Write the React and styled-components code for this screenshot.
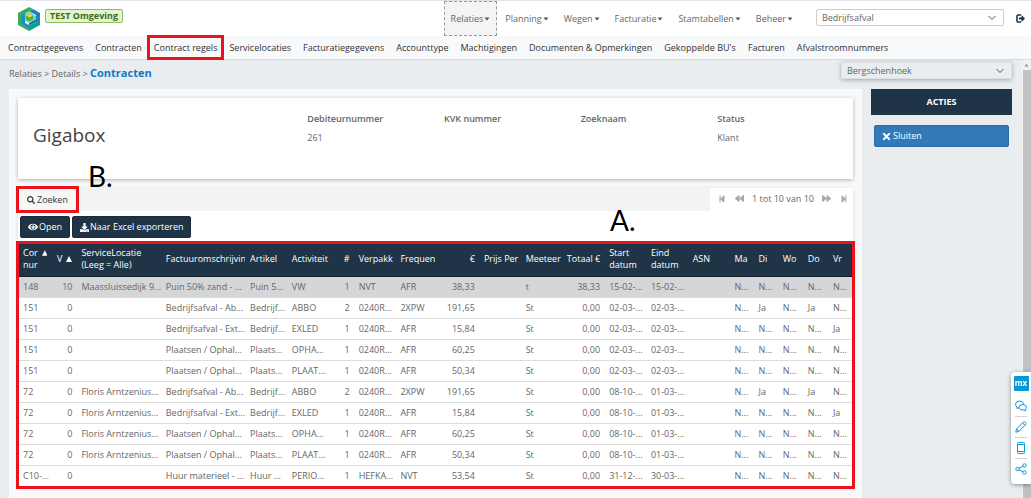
import React from 'react';
import styled, { createGlobalStyle, css } from 'styled-components';
import {
  FaBackward,
  FaDownload,
  FaEye,
  FaForward,
  FaSearch,
  FaStepBackward,
  FaStepForward,
  FaTimes,
} from 'react-icons/fa';

const GlobalStyle = createGlobalStyle`
  * { box-sizing: border-box; }
  body {
    margin: 0;
    background: #e9edf0;
    color: #666;
    font: 9px/12px "Open Sans", "Noto Sans", sans-serif;
  }
  button, select { font: inherit; color: inherit; }
  a { color: inherit; text-decoration: none; }
`;

const marked = css`
  outline: 3px solid #ed111c;
`;

const Page = styled.div`
  display: flex;
  flex-direction: column;
  min-height: 100vh;
`;

const TopBar = styled.header`
  display: flex;
  height: 36px;
  padding-right: 6px;
  background: #fff;
  border-top: 1px solid #e1e3e9;
`;

const Brand = styled.div`
  display: flex;
  flex: 1;
  align-items: flex-start;
  gap: 4px;
  padding: 5px 0 0 17px;
`;

const EnvBadge = styled.span`
  height: 14px;
  margin-top: 3px;
  padding: 0 4px;
  border: 1px solid #8dbb60;
  border-radius: 2px;
  background: #e4f4d1;
  color: #3b6b11;
  font-weight: 700;
  line-height: 12px;
`;

const MainMenu = styled.nav`
  display: flex;
  gap: 1px;
  margin-right: 16px;
`;

const MenuButton = styled.button`
  display: flex;
  align-items: center;
  gap: 1px;
  padding: 0 6px;
  border: 1px dashed ${p => (p.$open ? '#999' : 'transparent')};
  background: ${p => (p.$open ? '#f4f4f4' : 'none')};
  color: #666;
`;

const SelectWrap = styled.label`
  display: flex;
  position: relative;
  width: ${p => p.$width};
  height: 17px;
  margin-top: ${p => p.$top};
  border-radius: 2px;
  box-shadow: ${p => (p.$raised ? '0 1px 4px rgba(0, 0, 0, 0.3)' : 'none')};

  select {
    width: 100%;
    padding: 0 20px 0 5px;
    border: 1px solid ${p => (p.$raised ? '#dde1e4' : '#ccc')};
    border-radius: 2px;
    background: ${p => (p.$raised ? '#e9edf0' : '#fff')};
    appearance: none;
  }

  svg {
    position: absolute;
    top: 6px;
    right: 7px;
    pointer-events: none;
  }
`;

const IconButton = styled.button`
  display: flex;
  align-items: center;
  padding: 0;
  border: 0;
  background: none;
  color: ${p => p.$color || '#1f3446'};
`;

const SubNav = styled.nav`
  display: flex;
  height: 24px;
  padding-left: 2px;
  background: #f8f9fb;
  border-bottom: 1px solid #d8dcdf;
`;

const SubLink = styled.a`
  display: flex;
  align-items: center;
  padding: 0 6px;
  color: #333;
  white-space: nowrap;
  ${p => p.$marked && marked}
  outline-offset: -2px;
`;

const Body = styled.div`
  display: flex;
  flex: 1;
`;

const Content = styled.main`
  flex: 1;
  min-width: 0;
  padding: 0 10px 0 9px;
  display: flex;
  flex-direction: column;
`;

const CrumbRow = styled.div`
  display: flex;
  justify-content: space-between;
  height: 29px;
`;

const Crumbs = styled.div`
  padding-top: 7px;

  strong {
    color: #0b7bc8;
    font-size: 11px;
  }
`;

const Columns = styled.div`
  display: flex;
  flex: 1;
  gap: 9px;
`;

const Panel = styled.section`
  flex: 1;
  min-width: 0;
  padding: 9px;
  background: #f8f9fb;
`;

const Aside = styled.aside`
  width: 141px;

  h2 {
    margin: 0 0 10px;
    background: #1f3446;
    color: #fff;
    font-size: 9px;
    line-height: 26px;
    text-align: center;
  }
`;

const CloseButton = styled.button`
  display: flex;
  align-items: center;
  gap: 1px;
  width: calc(100% - 6px);
  height: 22px;
  margin: 0 3px;
  padding: 0 6px;
  border: 1px solid #2a6cab;
  border-radius: 2px;
  background: #3379b7;
  color: #fff;
`;

const Card = styled.div`
  display: grid;
  grid-template-columns: 2fr repeat(4, 1fr);
  height: 81px;
  margin-bottom: 9px;
  padding: 15px 0 0 15px;
  background: #fff;
  box-shadow: 0 1px 4px rgba(0, 0, 0, 0.3);

  h1 {
    margin: 9px 0 0;
    color: #444;
    font-size: 19px;
    font-weight: 400;
    line-height: 26px;
  }
`;

const Field = styled.div`
  display: flex;
  flex-direction: column;
  gap: 7px;
  padding-left: 1px;

  strong {
    font-weight: 600;
  }
`;

const List = styled.div`
  background: #fff;
  box-shadow: 0 1px 4px rgba(0, 0, 0, 0.15);
`;

const SearchBar = styled.div`
  display: flex;
  justify-content: space-between;
  height: 23px;
  background: #f3f3f3;
`;

const SearchButton = styled.button`
  display: flex;
  align-items: center;
  gap: 2px;
  padding: 0 9px;
  border: 0;
  background: #f7f7f7;
  color: #333;
  ${marked}
  outline-offset: -1px;
`;

const Paging = styled.div`
  display: flex;
  align-items: center;
  justify-content: space-between;
  width: 143px;
  padding: 0 5px 2px 8px;
  background: #fff;
`;

const Actions = styled.div`
  display: flex;
  gap: 2px;
  padding: 5px 2px;
`;

const DarkButton = styled.button`
  display: flex;
  align-items: center;
  gap: 1px;
  height: 22px;
  padding: 0 7px;
  border: 1px solid #1a2c3b;
  border-radius: 2px;
  background: #1f3446;
  color: #fff;
`;

const Grid = styled.table`
  width: 100%;
  border-collapse: collapse;
  table-layout: fixed;
  ${marked}
  outline-offset: -1px;

  tr > * {
    padding: 0 4px 0 5px;
    overflow: hidden;
    text-align: left;
    white-space: nowrap;
  }
`;

const HeadCell = styled.th`
  width: ${p => p.$width}%;
  height: 33px;
  background: #1f3446;
  border-bottom: 1px solid #12202c;
  color: #fff;
  font-weight: 400;

  div {
    display: flex;
    justify-content: ${p => (p.$right ? 'flex-end' : 'flex-start')};
    gap: 4px;
    white-space: pre;
  }
`;

const Row = styled.tr`
  height: 21px;
  border-bottom: 1px solid #ddd;
  background: ${p => (p.$selected ? '#d5d6d8' : '#fff')};
`;

const Cell = styled.td`
  && {
    text-align: ${p => (p.$right ? 'right' : 'left')};
  }
`;

const Scrollbar = styled.div`
  display: flex;
  flex-direction: column;
  align-items: center;
  width: 9px;
  background: #f1f1f1;

  div {
    flex: 1;
    width: 8px;
    background: #c1c1c1;
  }
`;

const Tools = styled.div`
  position: fixed;
  right: 0;
  bottom: 14px;
  display: flex;
  flex-direction: column;
  align-items: center;
  width: 20px;
  padding: 4px 0 5px;
  border-radius: 4px 0 0 4px;
  background: #fff;
  box-shadow: 0 1px 4px rgba(0, 0, 0, 0.4);
`;

const MxLogo = styled.div`
  width: 15px;
  height: 15px;
  margin-bottom: 4px;
  border-radius: 1px;
  background: #0a97da;
  color: #fff;
  font-size: 8px;
  font-weight: 700;
  line-height: 13px;
  text-align: center;
`;

const ToolButton = styled.button`
  display: flex;
  align-items: center;
  justify-content: center;
  width: 12px;
  height: 21px;
  padding: 0;
  border: 0;
  border-top: 1px solid ${p => (p.$first ? 'transparent' : '#d0d3d6')};
  background: none;
  color: #0a97da;
`;

// Callout letters that float above the page
const Callout = styled.span`
  position: absolute;
  left: ${p => p.$left};
  top: ${p => p.$top};
  color: #000;
  font: 400 28px/28px Lato, sans-serif;
`;

const columns = [
  { label: 'Cor\nnur', width: 4, sort: true },
  { label: 'V', width: 3, sort: true, right: true },
  { label: 'ServiceLocatie\n(Leeg = Alle)', width: 10.1 },
  { label: 'Factuuromschrijvin', width: 10.1 },
  { label: 'Artikel', width: 5 },
  { label: 'Activiteit', width: 5 },
  { label: '#', width: 3, right: true },
  { label: 'Verpakk', width: 5 },
  { label: 'Frequen', width: 5 },
  { label: '€', width: 5, right: true },
  { label: 'Prijs Per', width: 5 },
  { label: 'Meeteer', width: 5 },
  { label: 'Totaal €', width: 5, right: true },
  { label: 'Start\ndatum', width: 5 },
  { label: 'Eind\ndatum', width: 5 },
  { label: 'ASN', width: 5 },
  { label: 'Ma', width: 2.9 },
  { label: 'Di', width: 2.9 },
  { label: 'Wo', width: 3 },
  { label: 'Do', width: 3 },
  { label: 'Vr', width: 3 },
];

const N = 'N...';
const rows = [
  ['148', '10', 'Maassluissedijk 9...', 'Puin 50% zand - ...', 'Puin 5...', 'VW', '1', 'NVT', 'AFR', '38,33', '', 't', '38,33', '15-02-...', '15-02-...', '', N, N, N, N, N],
  ['151', '0', '', 'Bedrijfsafval - Ab...', 'Bedrijf...', 'ABBO', '2', '0240R...', '2XPW', '191,65', '', 'St', '0,00', '02-03-...', '02-03-...', '', N, 'Ja', N, 'Ja', N],
  ['151', '0', '', 'Bedrijfsafval - Ext...', 'Bedrijf...', 'EXLED', '1', '0240R...', 'AFR', '15,84', '', 'St', '0,00', '02-03-...', '02-03-...', '', N, N, N, N, 'Ja'],
  ['151', '0', '', 'Plaatsen / Ophal...', 'Plaats...', 'OPHA...', '1', '0240R...', 'AFR', '60,25', '', 'St', '0,00', '02-03-...', '02-03-...', '', N, N, N, N, N],
  ['151', '0', '', 'Plaatsen / Ophal...', 'Plaats...', 'PLAAT...', '1', '0240R...', 'AFR', '50,34', '', 'St', '0,00', '02-03-...', '02-03-...', '', N, N, N, N, N],
  ['72', '0', 'Floris Arntzenius...', 'Bedrijfsafval - Ab...', 'Bedrijf...', 'ABBO', '2', '0240R...', '2XPW', '191,65', '', 'St', '0,00', '08-10-...', '01-03-...', '', N, 'Ja', N, 'Ja', N],
  ['72', '0', 'Floris Arntzenius...', 'Bedrijfsafval - Ext...', 'Bedrijf...', 'EXLED', '1', '0240R...', 'AFR', '15,84', '', 'St', '0,00', '08-10-...', '01-03-...', '', N, N, N, N, 'Ja'],
  ['72', '0', 'Floris Arntzenius...', 'Plaatsen / Ophal...', 'Plaats...', 'OPHA...', '1', '0240R...', 'AFR', '60,25', '', 'St', '0,00', '08-10-...', '01-03-...', '', N, N, N, N, N],
  ['72', '0', 'Floris Arntzenius...', 'Plaatsen / Ophal...', 'Plaats...', 'PLAAT...', '1', '0240R...', 'AFR', '50,34', '', 'St', '0,00', '08-10-...', '01-03-...', '', N, N, N, N, N],
  ['C10-...', '0', '', 'Huur materieel - ...', 'Huur ...', 'PERIO...', '1', 'HEFKA...', 'NVT', '53,54', '', 'St', '0,00', '31-12-...', '30-03-...', '', N, N, N, N, N],
];

const menu = ['Relaties', 'Planning', 'Wegen', 'Facturatie', 'Stamtabellen', 'Beheer'];

const tabs = [
  'Contractgegevens',
  'Contracten',
  'Contract regels',
  'Servicelocaties',
  'Facturatiegegevens',
  'Accounttype',
  'Machtigingen',
  'Documenten & Opmerkingen',
  "Gekoppelde BU's",
  'Facturen',
  'Afvalstroomnummers',
];

const fields = [
  ['Debiteurnummer', '261'],
  ['KVK nummer', ''],
  ['Zoeknaam', ''],
  ['Status', 'Klant'],
];

function Logo() {
  return (
    <svg width="24" height="26" viewBox="0 0 24 26">
      <path d="M1 7 12 1l4 2-10 6v8l6 3v5L1 19z" fill="#35ac62" />
      <path d="M16 3l7 4v9l-4 2V9l-7-3.500z" fill="#1b86bd" />
      <path d="M5 9l3-2v10l4 2v3l-7-4z" fill="#1d8fc6" />
      <path d="M12 20l11-6v5l-11 6z" fill="#0ba287" />
      <path d="M12 17l7-4v3l-7 4z" fill="#1674a8" />
      <path d="M8 8l4-2 7 4v3l-7 4-4-2z" fill="#6fd0e0" />
      <path d="M9 9.500l3.500-2 3.500 2v4l-3.500 2-3.500-2z" fill="#4db335" />
      <path d="M9 9.500l3.500-2 3.500 2-3.500 2z" fill="#dbe02f" />
    </svg>
  );
}

function Caret() {
  return (
    <svg width="6" height="4" viewBox="0 0 6 4">
      <path d="M.5.500h5L3 3.500z" fill="#555" />
    </svg>
  );
}

function Chevron() {
  return (
    <svg width="10" height="6" viewBox="0 0 10 6" fill="none" stroke="#555">
      <path d="M1.500 1l3.500 3.500L8.500 1" />
    </svg>
  );
}

function SortArrow() {
  return (
    <svg width="6" height="12" viewBox="0 0 6 12">
      <path d="M0 9l3-6 3 6z" fill="#fff" />
    </svg>
  );
}

function LogoutIcon() {
  return (
    <svg width="21" height="9" viewBox="0 0 21 9">
      <path d="M17 1h-3q-1 0-1 1v5q0 1 1 1h3" fill="none" stroke="#1f3446" strokeWidth="1.6" />
      <path d="M15 3.500h2.500v-2.500L21 4.500l-3.500 3.500v-2.500H15z" fill="#1f3446" />
    </svg>
  );
}

function ToolIcon({ children }) {
  return (
    <svg width="12" height="12" viewBox="0 0 12 12" fill="none" stroke="currentColor">
      {children}
    </svg>
  );
}

function Header() {
  return (
    <>
      <TopBar>
        <Brand>
          <Logo />
          <EnvBadge>TEST Omgeving</EnvBadge>
        </Brand>
        <MainMenu>
          {menu.map((item, i) => (
            <MenuButton key={item} $open={i === 0}>
              {item}
              <Caret />
            </MenuButton>
          ))}
        </MainMenu>
        <SelectWrap $width="188px" $top="8px">
          <select aria-label="Afdeling">
            <option>Bedrijfsafval</option>
          </select>
          <Chevron />
        </SelectWrap>
        <IconButton aria-label="Uitloggen">
          <LogoutIcon />
        </IconButton>
      </TopBar>
      <SubNav>
        {tabs.map(tab => (
          <SubLink key={tab} href="#" $marked={tab === 'Contract regels'}>
            {tab}
          </SubLink>
        ))}
      </SubNav>
    </>
  );
}

function ContractGrid() {
  return (
    <Grid>
      <thead>
        <tr>
          {columns.map(col => (
            <HeadCell key={col.label} $width={col.width} $right={col.right}>
              <div>
                <span>{col.label}</span>
                {col.sort && <SortArrow />}
              </div>
            </HeadCell>
          ))}
        </tr>
      </thead>
      <tbody>
        {rows.map((row, r) => (
          <Row key={r} $selected={r === 0}>
            {row.map((text, c) => (
              <Cell key={c} $right={columns[c].right}>{text}</Cell>
            ))}
          </Row>
        ))}
      </tbody>
    </Grid>
  );
}

function App() {
  return (
    <Page>
      <GlobalStyle />
      <Header />
      <Body>
        <Content>
          <CrumbRow>
            <Crumbs>
              <a href="#">Relaties</a> &gt; <a href="#">Details</a> &gt; <strong>Contracten</strong>
            </Crumbs>
            <SelectWrap $width="171px" $top="2px" $raised>
              <select aria-label="Vestiging">
                <option>Bergschenhoek</option>
              </select>
              <Chevron />
            </SelectWrap>
          </CrumbRow>
          <Columns>
            <Panel>
              <Card>
                <h1>Gigabox</h1>
                {fields.map(([label, value]) => (
                  <Field key={label}>
                    <strong>{label}</strong>
                    <span>{value}</span>
                  </Field>
                ))}
              </Card>
              <List>
                <SearchBar>
                  <SearchButton>
                    <FaSearch size={8} />
                    Zoeken
                  </SearchButton>
                  <Paging>
                    <IconButton $color="#aaa" aria-label="Eerste"><FaStepBackward size={8} /></IconButton>
                    <IconButton $color="#aaa" aria-label="Vorige"><FaBackward size={9} /></IconButton>
                    <span>1 tot 10 van 10</span>
                    <IconButton $color="#aaa" aria-label="Volgende"><FaForward size={9} /></IconButton>
                    <IconButton $color="#aaa" aria-label="Laatste"><FaStepForward size={8} /></IconButton>
                  </Paging>
                </SearchBar>
                <Actions>
                  <DarkButton><FaEye size={10} />Open</DarkButton>
                  <DarkButton><FaDownload size={9} />Naar Excel exporteren</DarkButton>
                </Actions>
                <ContractGrid />
              </List>
            </Panel>
            <Aside>
              <h2>ACTIES</h2>
              <CloseButton><FaTimes size={11} />Sluiten</CloseButton>
            </Aside>
          </Columns>
        </Content>
        <Scrollbar>
          <svg width="9" height="10" viewBox="0 0 9 10">
            <path d="M2.500 6.500l2-2.500 2 2.500z" fill="#888" />
          </svg>
          <div />
        </Scrollbar>
      </Body>
      <Tools>
        <MxLogo>mx</MxLogo>
        <ToolButton $first aria-label="Feedback">
          <ToolIcon>
            <path d="M4 7.500 2 8.500V7Q.5 6 .5 4.200.8 1 4.500 1T8.500 4" />
            <path d="M7.500 4.500q4 0 4 2.700 0 1.300-1 2v1.600L9 10q-4.500.5-5-2.500 0-3 3.500-3z" />
          </ToolIcon>
        </ToolButton>
        <ToolButton aria-label="Bewerken">
          <ToolIcon>
            <path d="M.8 11.200 1.500 8 8.500 1q1-.8 2 .3t.3 2L4 10.400zM7.500 2l2.500 2.500M1.500 8 4 10.400" />
          </ToolIcon>
        </ToolButton>
        <ToolButton aria-label="Mobiel">
          <ToolIcon>
            <rect x="2.500" y=".5" width="7" height="11" rx="1" />
            <path d="M2.500 2.500h7M2.500 9.500h7" />
          </ToolIcon>
        </ToolButton>
        <ToolButton aria-label="Delen">
          <ToolIcon>
            <circle cx="2.500" cy="6" r="1.700" />
            <circle cx="9.500" cy="2.500" r="1.700" />
            <circle cx="9.500" cy="9.500" r="1.700" />
            <path d="M4 5.200l4-2M4 6.800l4 2" />
          </ToolIcon>
        </ToolButton>
      </Tools>
      <Callout $left="610px" $top="206px">A.</Callout>
      <Callout $left="88px" $top="162px">B.</Callout>
    </Page>
  );
}

export default App;
